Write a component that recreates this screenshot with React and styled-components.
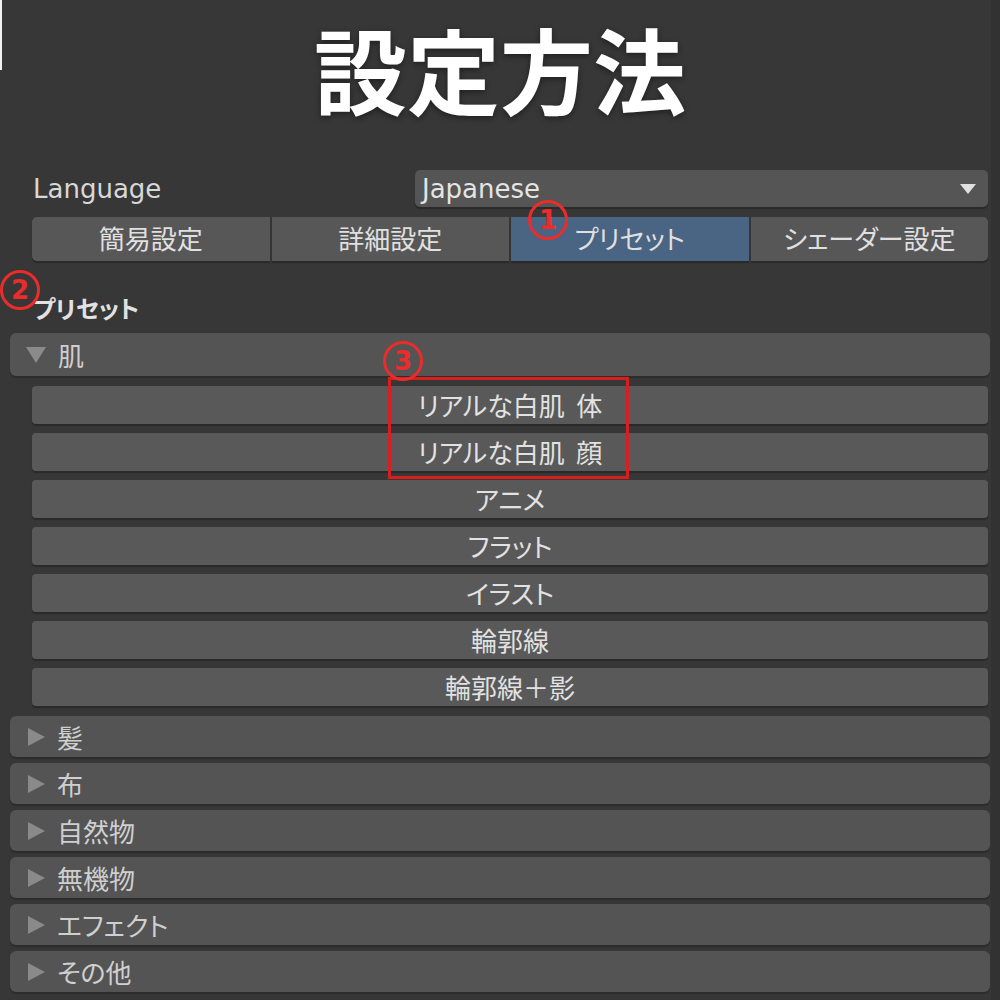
import React from "react";
import styled, { createGlobalStyle } from "styled-components";

const GlobalStyle = createGlobalStyle`
  body {
    margin: 0;
    background: #373737;
    font-family: "DejaVu Sans", "Noto Sans CJK JP", sans-serif;
  }
`;

const presets = [
  "リアルな白肌\u00a0\u00a0体",
  "リアルな白肌\u00a0\u00a0顔",
  "アニメ",
  "フラット",
  "イラスト",
  "輪郭線",
  "輪郭線＋影",
];

const closedCategories = ["髪", "布", "自然物", "無機物", "エフェクト", "その他"];

const tabs = ["簡易設定", "詳細設定", "プリセット", "シェーダー設定"];

const Marker = ({ n, className }) => <Circle className={className}>{n}</Circle>;

const App = () => {
  return (
    <>
      <GlobalStyle />
      <Page>
        <Title>設定方法</Title>
        <Panel>
          <LangRow>
            <Label>Language</Label>
            <Select>
              <span>Japanese</span>
              <Caret />
            </Select>
          </LangRow>

          <Tabs>
            {tabs.map((t, i) => (
              <Tab key={t} active={i === 2}>
                {i === 2 && <TabMarker n="1" />}
                {t}
              </Tab>
            ))}
          </Tabs>

          <SectionTitle>
            <SectionMarker n="2" />
            プリセット
          </SectionTitle>

          <Category open>
            <Arrow open />
            肌
          </Category>

          <ItemList>
            <ListMarker n="3" />
            <Highlight />
            {presets.map((p, i) => (
              <Item key={i}>{p}</Item>
            ))}
          </ItemList>

          <Closed>
            {closedCategories.map((c) => (
              <Category key={c}>
                <Arrow />
                {c}
              </Category>
            ))}
          </Closed>
        </Panel>
      </Page>
    </>
  );
};

const Page = styled.div`
  position: relative;
  width: 1000px;
  min-height: 1000px;
  background: #373737;
  font-feature-settings: "palt";

  &::before {
    content: "";
    position: absolute;
    left: 0;
    top: 0;
    width: 2px;
    height: 70px;
    background: #f2f2f2;
  }

  &::after {
    content: "";
    position: absolute;
    right: 0;
    top: 0;
    width: 9px;
    height: 1000px;
    background: #323232;
  }
`;

const Title = styled.h1`
  margin: 0;
  padding: 0;
  line-height: normal;
  text-align: center;
  font-family: "Noto Sans CJK JP", sans-serif;
  font-weight: 700;
  font-size: 93px;
  color: #ffffff;
  text-shadow: 0 2px 6px rgba(0, 0, 0, 0.45);
`;

const Panel = styled.div`
  padding: 35px 10px 0 10px;
  display: flex;
  flex-direction: column;
`;

const LangRow = styled.div`
  display: grid;
  grid-template-columns: 383px 1fr;
  align-items: center;
  margin: 0 2px 0 22px;
  height: 37px;
`;

const Label = styled.div`
  font-size: 26px;
  color: #d8d8d8;
  padding-left: 1px;
`;

const Select = styled.div`
  height: 37px;
  background: #555555;
  border-radius: 5px;
  box-shadow: 0 2px 1px #2a2a2a;
  display: flex;
  align-items: center;
  justify-content: space-between;
  padding: 0 12px 0 7px;
  font-size: 26px;
  color: #e4e4e4;
`;

const Caret = styled.span`
  width: 0;
  height: 0;
  border-left: 8px solid transparent;
  border-right: 8px solid transparent;
  border-top: 10px solid #e0e0e0;
`;

const Tabs = styled.div`
  display: flex;
  gap: 2px;
  margin: 10px 2px 0 22px;
  height: 44px;
`;

const Tab = styled.div`
  position: relative;
  flex: 1;
  display: flex;
  align-items: center;
  justify-content: center;
  padding-bottom: 4px;
  background: ${(p) => (p.active ? "#4a6483" : "#575757")};
  box-shadow: 0 2px 1px #2a2a2a;
  font-family: "Noto Sans CJK JP", sans-serif;
  font-size: 26px;
  color: #e0e0e0;

  &:first-child {
    border-radius: 5px 0 0 5px;
  }
  &:last-child {
    border-radius: 0 5px 5px 0;
  }
`;

const Circle = styled.span`
  position: absolute;
  width: 34px;
  height: 34px;
  border: 3px solid #ec2b2b;
  border-radius: 50%;
  display: flex;
  align-items: center;
  justify-content: center;
  font-family: "DejaVu Sans", sans-serif;
  font-weight: 700;
  font-size: 26px;
  line-height: 1;
  color: #ec2b2b;
  z-index: 2;
`;

const TabMarker = styled(Marker)`
  left: 17px;
  top: -17px;
`;

const SectionMarker = styled(Marker)`
  left: -10px;
  top: 9px;
`;

const ListMarker = styled(Marker)`
  left: 351px;
  top: -45px;
`;

const SectionTitle = styled.div`
  position: relative;
  padding: 33px 0 11px 23px;
  line-height: 28px;
  font-family: "Noto Sans CJK JP", sans-serif;
  font-weight: 700;
  font-size: 24px;
  color: #e2e2e2;
`;

const Category = styled.div`
  height: ${(p) => (p.open ? "43px" : "41px")};
  background: #545454;
  border-radius: 6px;
  box-shadow: 0 2px 1px #2c2c2c;
  display: flex;
  align-items: center;
  gap: 12px;
  padding-left: 16px;
  font-family: "Noto Sans CJK JP", sans-serif;
  font-size: 26px;
  color: #cfcfcf;
`;

const Arrow = styled.span`
  width: 0;
  height: 0;
  ${(p) =>
    p.open
      ? `border-left: 10px solid transparent;
         border-right: 10px solid transparent;
         border-top: 16px solid #8a8a8a;`
      : `border-top: 9px solid transparent;
         border-bottom: 9px solid transparent;
         border-left: 17px solid #8a8a8a;
         margin-left: 2px;`}
`;

const ItemList = styled.div`
  position: relative;
  display: flex;
  flex-direction: column;
  gap: 9px;
  margin: 10px 2px 10px 22px;
`;

const Highlight = styled.div`
  position: absolute;
  left: 356px;
  top: -9px;
  width: 241px;
  height: 102px;
  box-sizing: border-box;
  border: 3px solid #d81f1f;
  z-index: 1;
  pointer-events: none;
`;

const Item = styled.div`
  height: 38px;
  background: #595959;
  border-radius: 4px;
  box-shadow: 0 2px 1px #2a2a2a;
  display: flex;
  align-items: center;
  justify-content: center;
  padding-bottom: 2px;
  box-sizing: border-box;
  font-family: "Noto Sans CJK JP", sans-serif;
  font-size: 26px;
  color: #e2e2e2;
`;

const Closed = styled.div`
  display: flex;
  flex-direction: column;
  gap: 6px;
`;

export default App;
